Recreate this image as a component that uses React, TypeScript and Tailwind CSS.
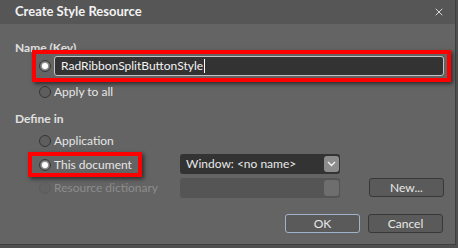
import { X } from "lucide-react";

function Radio({ checked = false, disabled = false }: { checked?: boolean; disabled?: boolean }) {
    return (
        <span
            className={
                "flex h-[12px] w-[12px] shrink-0 items-center justify-center rounded-full border " +
                (disabled ? "border-[#5c5c5c] bg-[#626262]" : "border-[#353535] bg-[#5e5e5e]")
            }
        >
            {checked && <span className="h-[6px] w-[6px] rounded-full bg-white shadow-[0_0_2px_1px_rgba(255,255,255,0.5)]" />}
        </span>
    );
}

function Chevron() {
    return (
        <svg width="9" height="6" viewBox="0 0 9 6" fill="none">
            <path d="M1 1 L4.5 4.5 L8 1" stroke="#f2f2f2" strokeWidth="1.4" />
        </svg>
    );
}

export default function App() {
    return (
        <div className="h-[248px] w-[458px] bg-[#4f4f4f] font-['Lato',sans-serif] text-[12px] text-[#e6e6e6]">
            <div className="flex h-[245px] w-[456px] flex-col border-r border-b border-[#3e3e3e] bg-[#646464]">
                {/* Title bar */}
                <div className="flex h-[24px] shrink-0 items-center justify-between bg-[#565656] pl-[15px] pr-[10px]">
                    <span className="text-[13px] font-bold text-[#f2f2f2]">Create Style Resource</span>
                    <X className="h-[12px] w-[12px] text-[#d8d8d8]" strokeWidth={2} />
                </div>

                <div className="flex flex-col px-[15px] pt-[18px]">
                    {/* Name (Key) */}
                    <div className="h-[11px] leading-[11px] font-bold text-[#e0e0e0]">Name (Key)</div>
                    <div className="ml-[17px] mt-[-3px] flex h-[32px] w-[419px] items-center gap-[3px] border-[4px] border-[#ff0000] pl-[3px] shadow-[2px_2px_4px_rgba(0,0,0,0.55)]">
                        <Radio checked />
                        <div className="flex h-[20px] w-[390px] items-center rounded-[3px] border border-[#c4c4c4] bg-[#333333] pl-[6px] text-[12px] text-[#f4f4f4]">
                            RadRibbonSplitButtonStyle
                            <span className="ml-[1px] h-[14px] w-px bg-white" />
                        </div>
                    </div>
                    <div className="ml-[24px] flex h-[20px] items-center gap-[3px]">
                        <Radio />
                        <span>Apply to all</span>
                    </div>

                    {/* Define in */}
                    <div className="mt-[9px] h-[16px] leading-[16px] font-bold text-[#e0e0e0]">Define in</div>
                    <div className="mt-[3px] grid grid-cols-[165px_160px_1fr]">
                        <div className="col-span-3 ml-[24px] flex h-[22px] items-center gap-[3px]">
                            <Radio />
                            <span>Application</span>
                        </div>

                        <div className="h-[26px]">
                            <div className="ml-[13px] flex h-[25px] w-[114px] items-center gap-[3px] border-[4px] border-[#ff0000] pl-[7px] shadow-[2px_2px_4px_rgba(0,0,0,0.55)]">
                                <Radio checked />
                                <span>This document</span>
                            </div>
                        </div>
                        <div className="mt-[2px] flex h-[20px] items-center justify-between rounded-[3px] bg-[#333333] pl-[6px] pr-[1px] text-[#e8e8e8]">
                            <span>Window: &lt;no name&gt;</span>
                            <span className="flex h-[16px] w-[15px] items-center justify-center rounded-[3px] bg-[#8c8c8c]">
                                <Chevron />
                            </span>
                        </div>
                        <div />

                        <div className="ml-[24px] flex h-[20px] items-center gap-[3px] text-[#8c8c8c]">
                            <Radio disabled />
                            <span>Resource dictionary</span>
                        </div>
                        <div className="flex h-[20px] items-center justify-end rounded-[3px] bg-[#555555] pr-[1px]">
                            <span className="h-[16px] w-[15px] rounded-[3px] bg-[#6e6e6e]" />
                        </div>
                        <div className="pl-[29px]">
                            <button className="flex h-[19px] w-[75px] items-center justify-center rounded-[3px] border border-[#383838] bg-[#5a5a5a] text-[#e8e8e8]">
                                New...
                            </button>
                        </div>
                    </div>

                    {/* Footer buttons */}
                    <div className="mt-[16px] flex justify-end gap-[8px] pr-[-3px]">
                        <button className="flex h-[19px] w-[75px] items-center justify-center rounded-[3px] border-[1.5px] border-[#9fb4cc] bg-[#5a5a5a] text-[#e8e8e8]">
                            OK
                        </button>
                        <button className="mr-[-3px] flex h-[19px] w-[75px] items-center justify-center rounded-[3px] border border-[#383838] bg-[#5a5a5a] text-[#e8e8e8]">
                            Cancel
                        </button>
                    </div>
                </div>
            </div>
        </div>
    );
}
